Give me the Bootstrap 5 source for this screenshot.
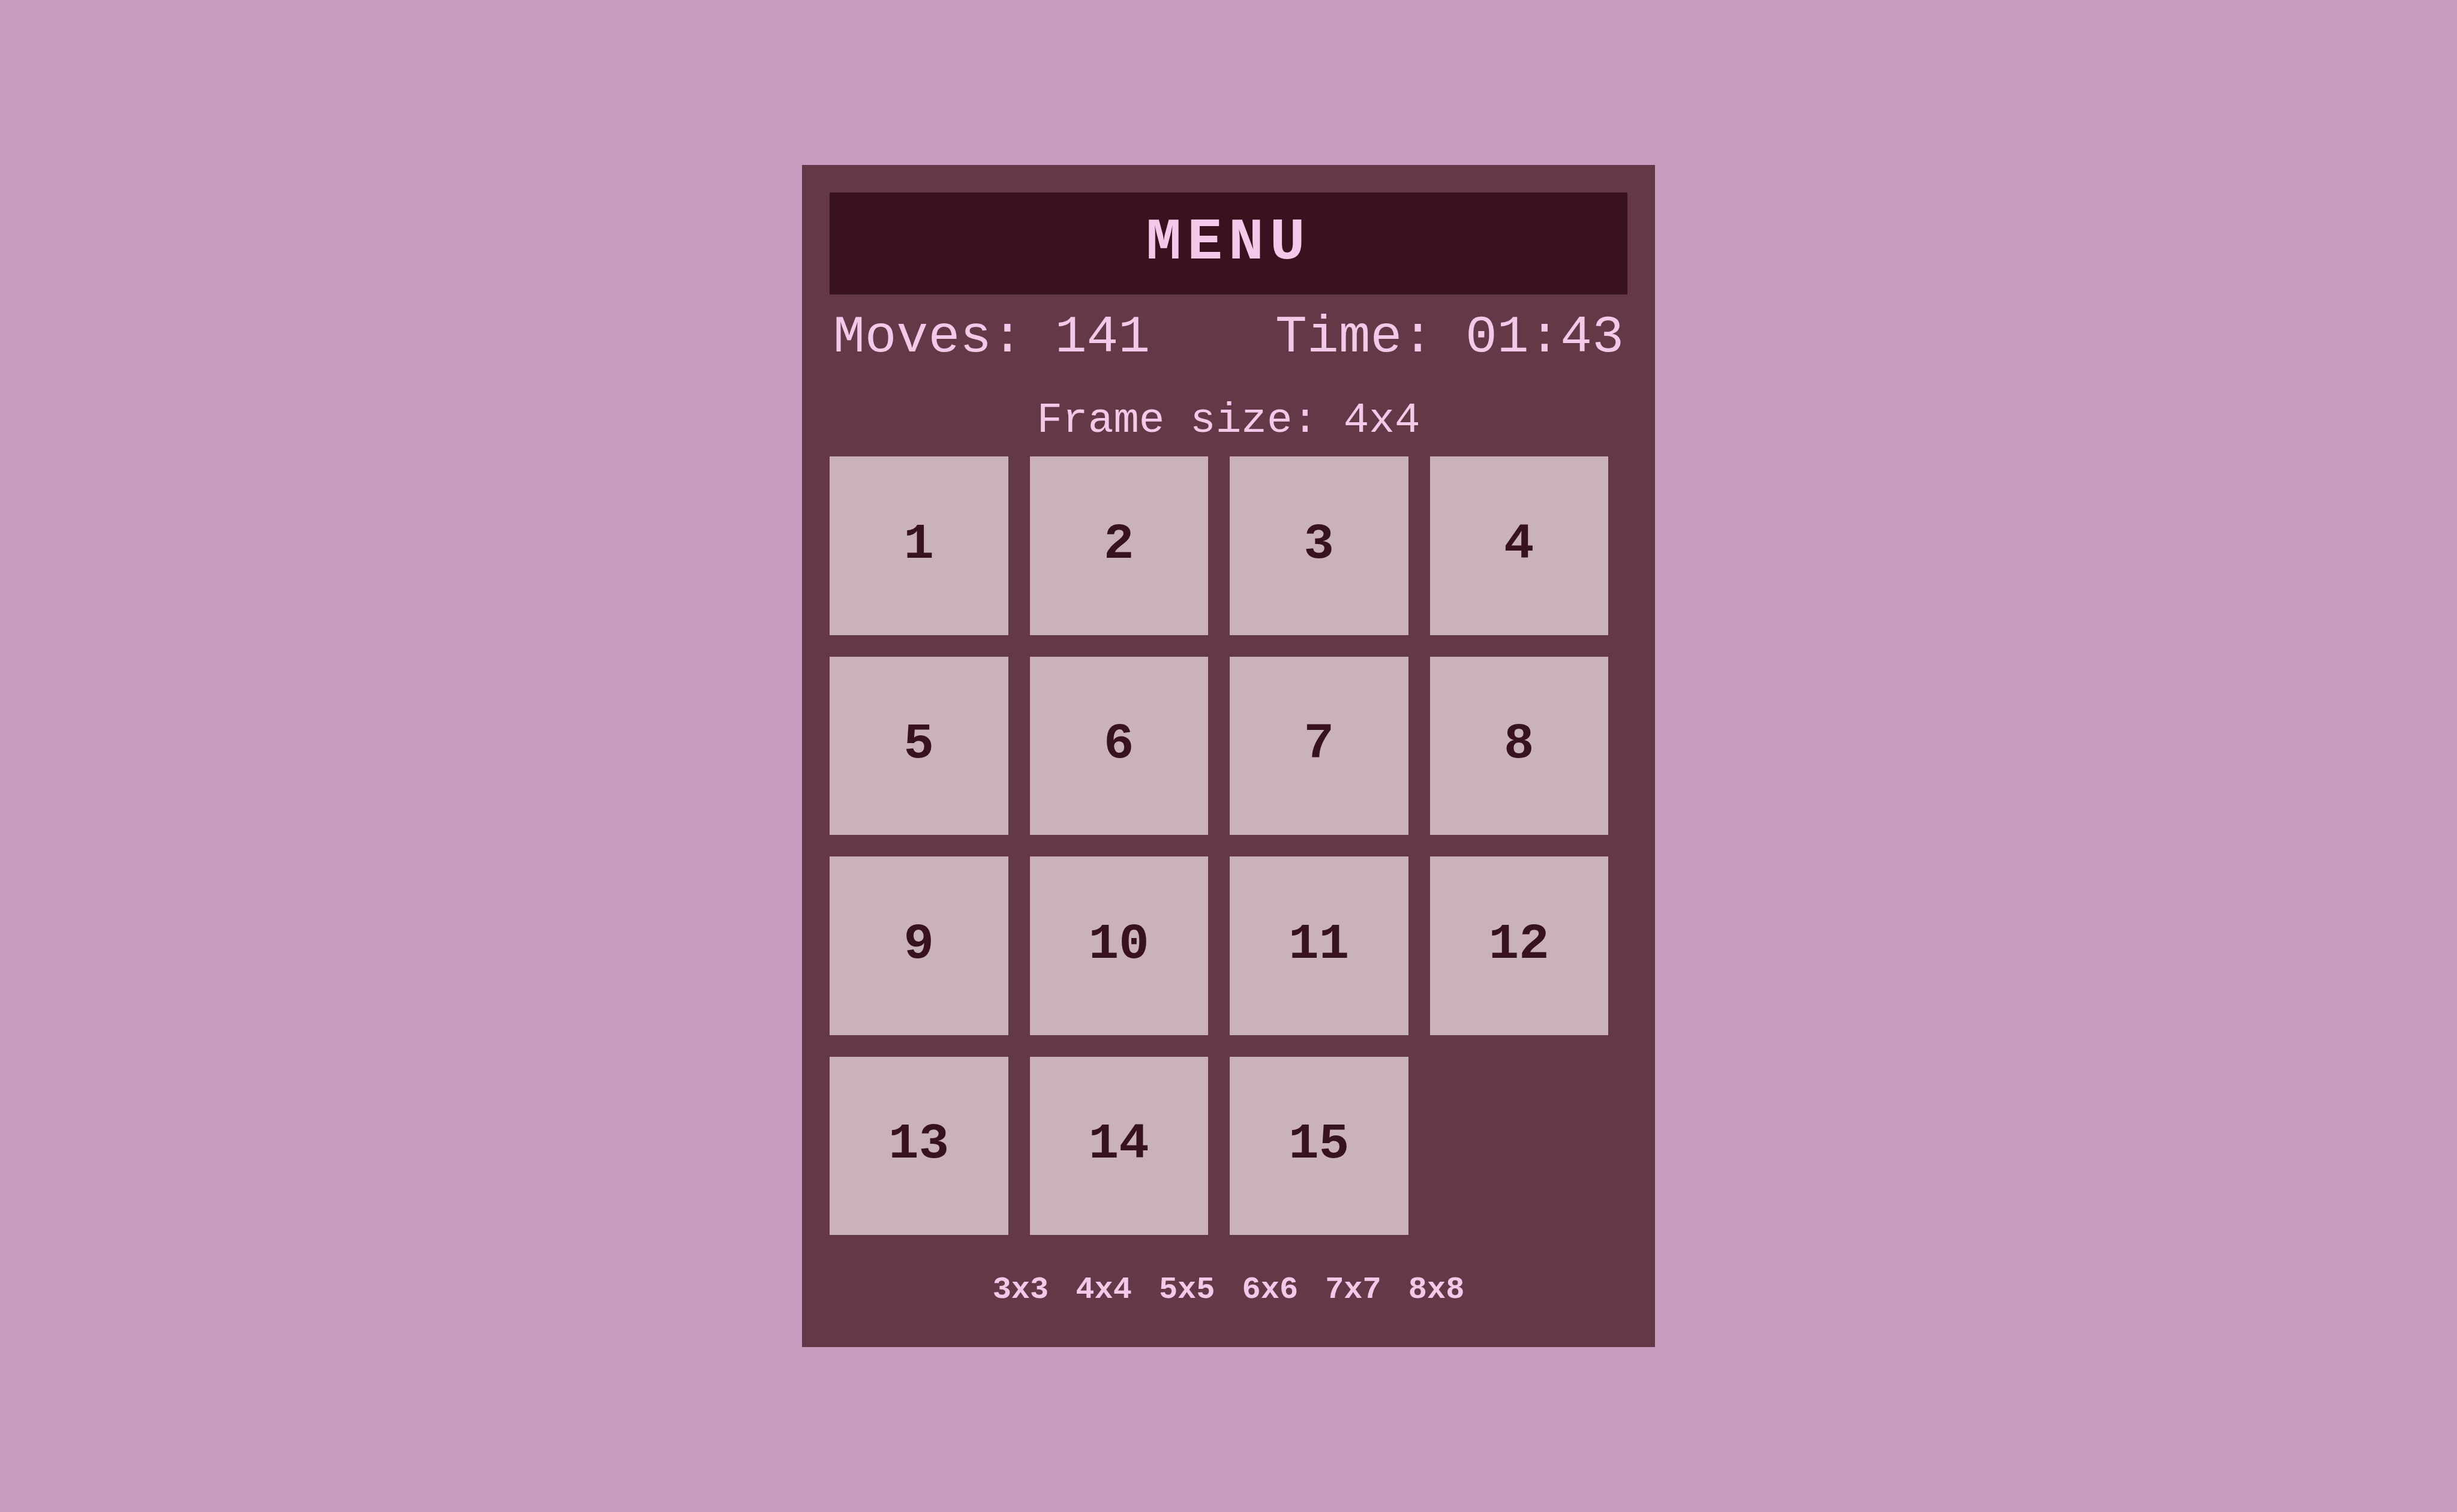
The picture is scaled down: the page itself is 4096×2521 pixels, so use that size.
<!DOCTYPE html>
<html lang="en">
<head>
<meta charset="utf-8">
<meta name="viewport" content="width=device-width, initial-scale=1">
<title>Gem Puzzle</title>
<link href="https://cdn.jsdelivr.net/npm/bootstrap@5.3.0/dist/css/bootstrap.min.css" rel="stylesheet">
<style>
body { background: #c99dc0; color: #f2c9e8; font-family: "Courier New", "Liberation Mono", monospace; }
.game { background: #643846; width: 1422px; max-width: 100%; padding: 46px; }
.menu-btn { background: #38121e; color: #f2c9e8; border: 0; padding: 24px 0 26px; font-size: 98px; line-height: 120px; font-weight: 700; letter-spacing: 10px; }
.stats { font-size: 88px; line-height: 100px; padding: 22px 6px 0; }
.frame-size { font-size: 71px; line-height: 80px; padding: 48px 0 20px; }
.board { display: grid; grid-template-columns: repeat(4, 1fr); gap: 36px; max-width: 1298px; }
.tile { aspect-ratio: 1; background: #c9b2bb; color: #38121e; border: 0; padding: 0 0 4px; font-size: 84px; line-height: 96px; font-weight: 700; }
.sizes { gap: 45px; padding-top: 60px; padding-bottom: 17px; }
.size-link { color: #f2c9e8; font-size: 52px; line-height: 64px; font-weight: 700; }
</style>
</head>
<body>
<div class="min-vh-100 d-flex align-items-center justify-content-center">
  <main class="game">
    <button type="button" class="menu-btn d-block w-100">MENU</button>
    <div class="stats d-flex flex-wrap justify-content-between"><span>Moves: 141</span><span>Time: 01:43</span></div>
    <div class="frame-size text-center">Frame size: 4x4</div>
    <div class="board">
      <button type="button" class="tile">1</button>
      <button type="button" class="tile">2</button>
      <button type="button" class="tile">3</button>
      <button type="button" class="tile">4</button>
      <button type="button" class="tile">5</button>
      <button type="button" class="tile">6</button>
      <button type="button" class="tile">7</button>
      <button type="button" class="tile">8</button>
      <button type="button" class="tile">9</button>
      <button type="button" class="tile">10</button>
      <button type="button" class="tile">11</button>
      <button type="button" class="tile">12</button>
      <button type="button" class="tile">13</button>
      <button type="button" class="tile">14</button>
      <button type="button" class="tile">15</button>
    </div>
    <nav class="sizes d-flex flex-wrap justify-content-center" aria-label="Frame sizes">
      <a href="#" class="size-link text-decoration-none">3x3</a>
      <a href="#" class="size-link text-decoration-none">4x4</a>
      <a href="#" class="size-link text-decoration-none">5x5</a>
      <a href="#" class="size-link text-decoration-none">6x6</a>
      <a href="#" class="size-link text-decoration-none">7x7</a>
      <a href="#" class="size-link text-decoration-none">8x8</a>
    </nav>
  </main>
</div>
<script src="https://cdn.jsdelivr.net/npm/bootstrap@5.3.0/dist/js/bootstrap.bundle.min.js"></script>
</body>
</html>
